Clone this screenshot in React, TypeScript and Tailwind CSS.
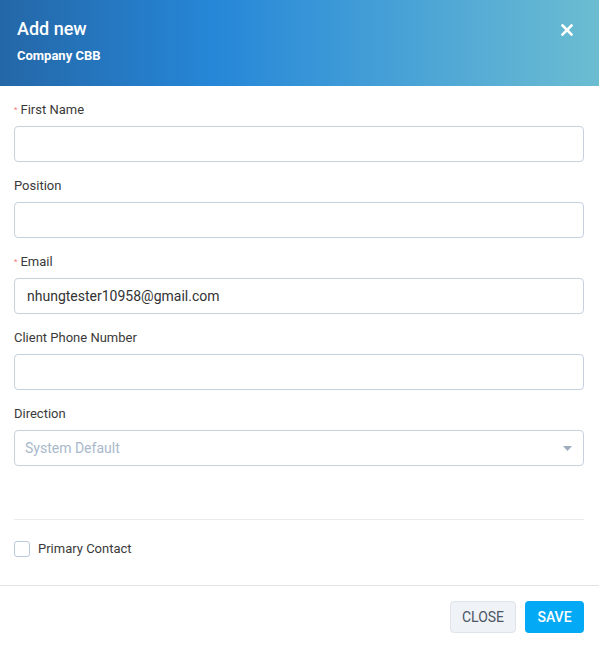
import { useState } from "react";

const Label = ({ text, required }: { text: string; required?: boolean }) => (
  <label className="flex h-5 items-center text-[13px] leading-5 text-[#3a3a3a] mb-[6px]">
    {required && <span className="mr-[3px] text-[8px] leading-none text-[#f7777b] -mt-[1px]">*</span>}
    {text}
  </label>
);

const Field = ({
  label,
  required,
  value,
}: {
  label: string;
  required?: boolean;
  value?: string;
}) => (
  <div className="mb-[14px]">
    <Label text={label} required={required} />
    <input
      defaultValue={value}
      className="block h-9 w-full rounded-[4px] border border-[#c6d1de] bg-white px-3 text-[14px] text-[#333] outline-none"
    />
  </div>
);

export default function App() {
  const [primary, setPrimary] = useState(false);

  return (
    <div className="h-[648px] w-[599px] bg-white font-['Roboto',sans-serif] flex flex-col">
      {/* Header */}
      <div className="h-[86px] shrink-0 bg-[linear-gradient(to_right,#2467a7,#2687d8_36%,#4ba4d6_70%,#6cbdd1)] pl-[17px] pr-[25px] pt-[17px] text-white flex justify-between">
        <div>
          <div className="text-[18px] font-medium leading-6">Add new</div>
          <div className="mt-[7px] text-[13px] font-bold leading-4">Company CBB</div>
        </div>
        <button className="mt-[5px] -mr-[1px] h-4 w-4 flex items-center justify-center">
          <svg width="12" height="12" viewBox="0 0 12 12">
            <path d="M1.5 1.5 L10.5 10.5 M10.5 1.5 L1.5 10.5" stroke="white" strokeWidth="2.6" strokeLinecap="square" />
          </svg>
        </button>
      </div>

      {/* Body */}
      <div className="flex-1 pl-[14px] pr-[15px] pt-[14px]">
        <Field label="First Name" required />
        <Field label="Position" />
        <Field label="Email" required value="nhungtester10958@gmail.com" />
        <Field label="Client Phone Number" />

        <div>
          <Label text="Direction" />
          <div className="flex h-9 w-full items-center justify-between rounded-[4px] border border-[#c6d1de] pl-[10px] pr-[11px]">
            <span className="text-[14px] text-[#a9b8cb]">System Default</span>
            <svg width="9" height="5" viewBox="0 0 9 5">
              <path d="M0 0 H9 L4.5 5 Z" fill="#9eacbe" />
            </svg>
          </div>
        </div>

        <div className="mt-[53px] border-t border-[#e8eaed]" />

        <label className="mt-[19px] flex items-center gap-[8px] cursor-pointer">
          <input
            type="checkbox"
            checked={primary}
            onChange={(e) => setPrimary(e.target.checked)}
            className="h-4 w-4 appearance-none rounded-[3px] border border-[#b9c8da] bg-white"
          />
          <span className="text-[13px] text-[#3a3a3a]">Primary Contact</span>
        </label>
      </div>

      {/* Footer */}
      <div className="h-[63px] shrink-0 border-t border-[#e4e4e4] flex items-start justify-end gap-[9px] pt-[15px] pr-[15px]">
        <button className="h-8 w-[66px] rounded-[4px] border border-[#dfe4ea] bg-[#eff3f7] text-[14px] text-[#4b5563]">
          CLOSE
        </button>
        <button className="h-8 w-[59px] rounded-[4px] bg-[#03a9f4] text-[14px] font-medium text-white">
          SAVE
        </button>
      </div>
    </div>
  );
}
